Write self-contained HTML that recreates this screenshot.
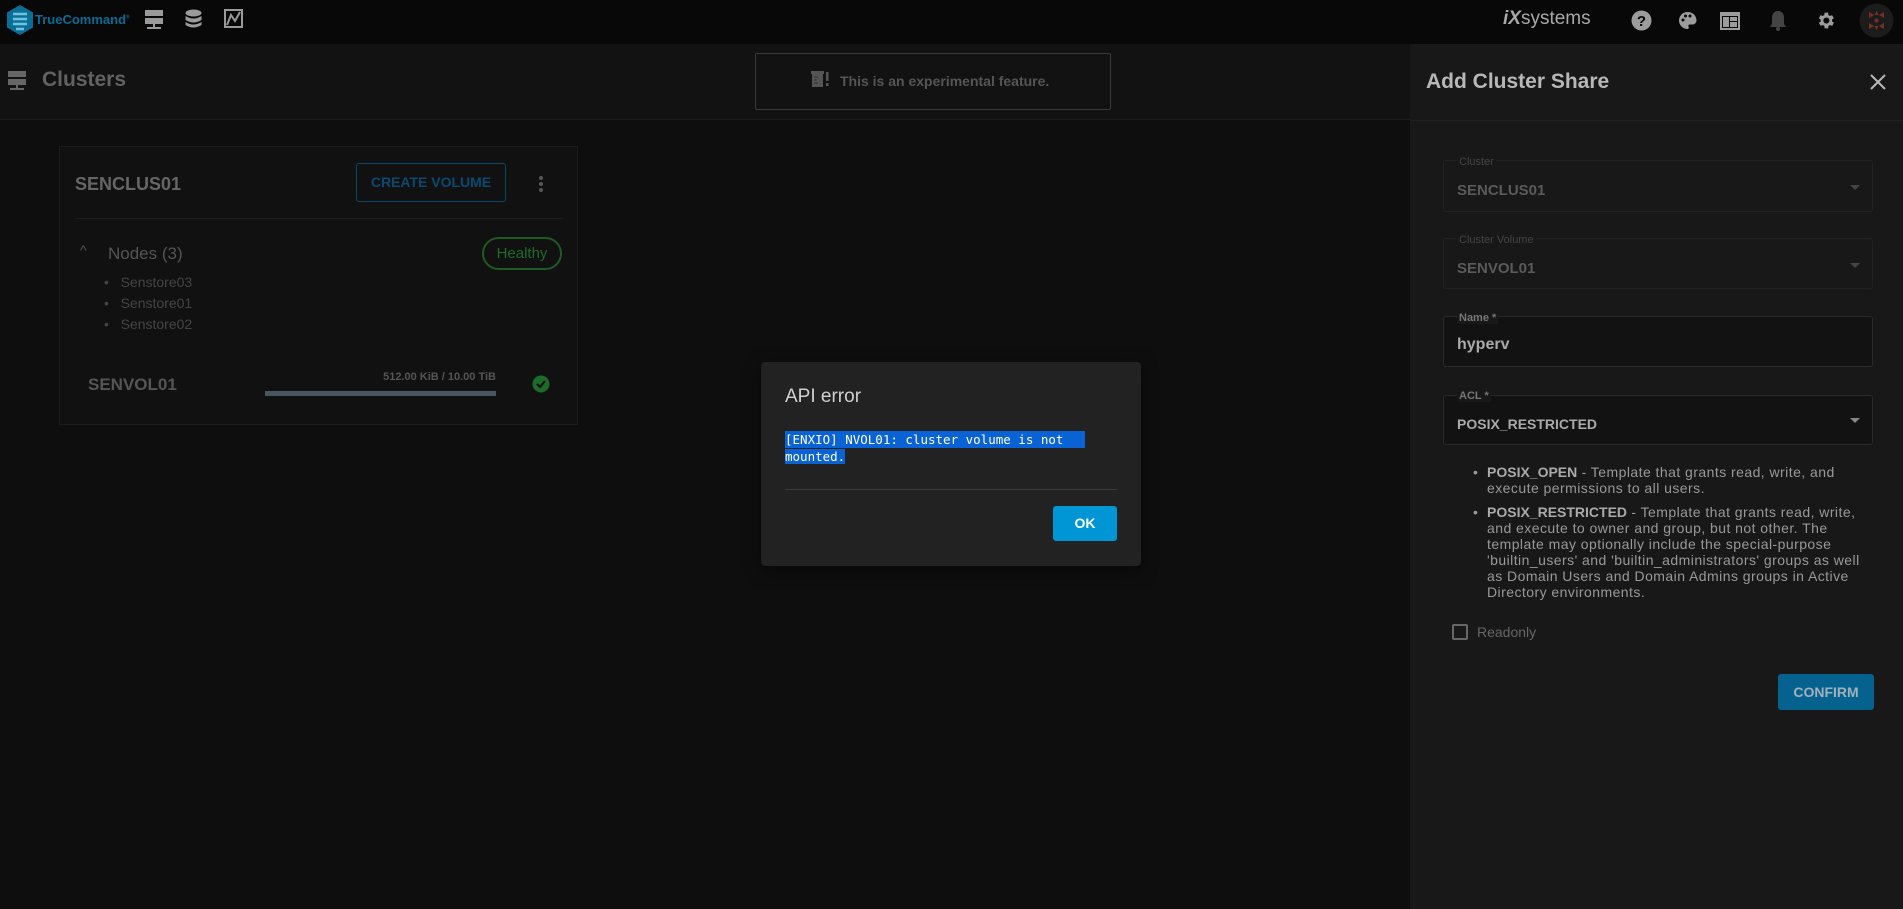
<!DOCTYPE html>
<html><head><meta charset="utf-8">
<style>
*{box-sizing:border-box;margin:0;padding:0}
body{width:1903px;height:909px;background:#0e0e0e;font-family:"Liberation Sans",sans-serif;position:relative;overflow:hidden;color:#888}
.a{position:absolute}
.top{left:0;top:0;width:1903px;height:44px;background:#080808}
.hdr{left:0;top:44px;width:1410px;height:76px;background:#121212;border-bottom:1px solid #1c1c1c}
.panel{left:1410px;top:44px;width:493px;height:865px;background:#181818}
.card{left:59px;top:146px;width:519px;height:279px;background:#111;border:1px solid #1b1b1b}
.fld{left:1443px;width:430px;border:1px solid #222;border-radius:3px}
.lbl{font-size:11px;color:#444}
.val{font-size:15px;font-weight:bold;color:#5a5a5a}
.tri{width:0;height:0;border-left:5px solid transparent;border-right:5px solid transparent;border-top:5px solid #444}
</style></head><body>
<div class="a top"></div>
<svg class="a" style="left:7px;top:5px" width="26" height="30" viewBox="0 0 26 30"><polygon points="13,0 26,7.5 26,22.5 13,30 0,22.5 0,7.5" fill="#0a6f96"/><path d="M6 9h14M6 14h14M6 19h14M9 24h8" stroke="#6ec3e0" stroke-width="2.5"/></svg>
<div class="a" style="left:35px;top:12px;font-size:13px;font-weight:bold;color:#0b6c93">TrueCommand<sup style="font-size:5px">®</sup></div>
<svg class="a" style="left:145px;top:10px" width="18" height="20"><rect x="0" y="0" width="18" height="6" fill="#9a9a9a"/><rect x="0" y="8" width="18" height="6" fill="#9a9a9a"/><rect x="8" y="14" width="2" height="4" fill="#9a9a9a"/><rect x="2" y="17" width="14" height="2" fill="#9a9a9a"/></svg>
<svg class="a" style="left:185px;top:9px" width="17" height="20"><ellipse cx="8.5" cy="4" rx="8" ry="3.5" fill="#9a9a9a"/><path d="M0.5 7q8 5 16 0v4q-8 5-16 0zM0.5 13q8 5 16 0v3q-8 5-16 0z" fill="#9a9a9a"/></svg>
<svg class="a" style="left:224px;top:9px" width="19" height="19"><rect x="1" y="1" width="17" height="17" fill="none" stroke="#9a9a9a" stroke-width="2"/><path d="M3 16L7 6l4 6 5-9" stroke="#9a9a9a" stroke-width="2" fill="none"/></svg>
<div class="a" style="left:1503px;top:8px;font-size:19px;color:#a8a8a8"><b style="font-style:italic">iX</b>systems</div>
<svg class="a" style="left:1631px;top:10px" width="21" height="21"><circle cx="10.5" cy="10.5" r="10" fill="#9c9c9c"/><text x="10.5" y="16" font-size="15" font-weight="bold" text-anchor="middle" fill="#080808" font-family="Liberation Sans">?</text></svg>
<svg class="a" style="left:1678px;top:11px" width="19" height="19"><path d="M9.5 1a8.5 8.5 0 0 0 0 17c1.5 0 1.5-1.5 1-2.5s0-2 1.5-2h2.5a4 4 0 0 0 4-4C18.5 4.5 14.5 1 9.5 1z" fill="#9c9c9c"/><circle cx="5" cy="9" r="1.5" fill="#080808"/><circle cx="7.5" cy="5" r="1.5" fill="#080808"/><circle cx="12" cy="5" r="1.5" fill="#080808"/></svg>
<svg class="a" style="left:1720px;top:12px" width="20" height="18"><rect x="0" y="0" width="20" height="18" fill="#9c9c9c"/><rect x="2" y="4" width="16" height="12" fill="#080808"/><rect x="3" y="5" width="6" height="10" fill="#9c9c9c"/><rect x="10" y="5" width="7" height="4" fill="#9c9c9c"/><rect x="10" y="10" width="7" height="5" fill="#9c9c9c"/></svg>
<svg class="a" style="left:1769px;top:10px" width="18" height="22"><path d="M9 1c-4 0-6 3-6 7v6l-2 3h16l-2-3V8c0-4-2-7-6-7z" fill="#444"/><circle cx="9" cy="19" r="2" fill="#444"/></svg>
<svg class="a" style="left:1815px;top:10px" width="21" height="21" viewBox="0 0 24 24"><path fill="#9c9c9c" d="M19.4 13a7.5 7.5 0 0 0 0-2l2.1-1.6-2-3.5-2.5 1a7.5 7.5 0 0 0-1.7-1L15 3h-4l-.4 2.9a7.5 7.5 0 0 0-1.7 1l-2.5-1-2 3.5L6.6 11a7.5 7.5 0 0 0 0 2l-2.1 1.6 2 3.5 2.5-1c.5.4 1.1.8 1.7 1L11 21h4l.4-2.9c.6-.2 1.2-.6 1.7-1l2.5 1 2-3.5zM13 15.5a3.5 3.5 0 1 1 0-7 3.5 3.5 0 0 1 0 7z"/></svg>
<svg class="a" style="left:1859px;top:3px" width="35" height="35"><circle cx="17.5" cy="17.5" r="17" fill="#1c1c1c"/><path d="M10 9l5 3-5 3zM25 9l-5 3 5 3zM10 26l5-3-5-3zM25 26l-5-3 5-3zM17.5 8l2 4h-4zM17.5 27l2-4h-4z" fill="#7a2e22"/><circle cx="17.5" cy="17.5" r="2" fill="#7a2e22"/></svg>

<div class="a hdr"></div>
<svg class="a" style="left:8px;top:71px" width="18" height="20"><rect x="0" y="0" width="18" height="6" fill="#666"/><rect x="0" y="8" width="18" height="6" fill="#666"/><rect x="8" y="14" width="2" height="4" fill="#666"/><rect x="2" y="17" width="14" height="2" fill="#666"/></svg>
<div class="a" style="left:42px;top:68px;font-size:21px;font-weight:bold;color:#626262">Clusters</div>
<div class="a" style="left:755px;top:53px;width:356px;height:57px;border:1px solid #3a3a3a;border-radius:2px"></div>
<svg class="a" style="left:811px;top:71px" width="19" height="17"><rect x="0" y="0" width="13" height="3" fill="#555"/><rect x="1" y="2" width="11" height="14" fill="#555"/><path d="M3 6h4M3 9h3M3 12h4" stroke="#333" stroke-width="1"/><rect x="15" y="1" width="2.5" height="9" fill="#555"/><rect x="15" y="12" width="2.5" height="3" fill="#555"/></svg>
<div class="a" style="left:840px;top:73px;font-size:14px;font-weight:bold;color:#555">This is an experimental feature.</div>

<div class="a card"></div>
<div class="a" style="left:75px;top:174px;font-size:18px;font-weight:bold;color:#666">SENCLUS01</div>
<div class="a" style="left:356px;top:163px;width:150px;height:39px;border:1px solid #0b4668;border-radius:3px;color:#0a4a70;font-size:14px;font-weight:bold;text-align:center;line-height:37px">CREATE VOLUME</div>
<div class="a" style="left:539px;top:176px;width:4px;height:4px;border-radius:2px;background:#555;box-shadow:0 6px #555,0 12px #555"></div>
<div class="a" style="left:75px;top:218px;width:488px;height:1px;background:#1c1c1c"></div>
<div class="a" style="left:80px;top:242px;font-size:14px;color:#555">^</div>
<div class="a" style="left:108px;top:244px;font-size:17px;color:#555">Nodes (3)</div>
<div class="a" style="left:482px;top:237px;width:80px;height:33px;border:2px solid #1d5a24;border-radius:17px;color:#1f6a2b;font-size:15px;text-align:center;line-height:29px">Healthy</div>
<div class="a" style="left:104px;top:272px;font-size:14px;line-height:21px;color:#444">
<div>•&nbsp;&nbsp; Senstore03</div><div>•&nbsp;&nbsp; Senstore01</div><div>•&nbsp;&nbsp; Senstore02</div></div>
<div class="a" style="left:88px;top:375px;font-size:17px;font-weight:bold;color:#555">SENVOL01</div>
<div class="a" style="left:265px;top:371px;width:231px;text-align:right;font-size:11px;font-weight:bold;color:#555">512.00 KiB / 10.00 TiB</div>
<div class="a" style="left:265px;top:391px;width:231px;height:5px;background:#48565f"></div>
<svg class="a" style="left:532px;top:375px" width="18" height="18"><circle cx="9" cy="9" r="8.5" fill="#1b6b2a"/><path d="M5 9l3 3 5-6" stroke="#0e0e0e" stroke-width="2" fill="none"/></svg>

<div class="a panel"></div>
<div class="a" style="left:1410px;top:120px;width:493px;height:1px;background:#202020"></div>
<div class="a" style="left:1426px;top:70px;font-size:21px;font-weight:bold;color:#b8b8b8">Add Cluster Share</div>
<svg class="a" style="left:1870px;top:74px" width="16" height="16"><path d="M1 1l14 14M15 1L1 15" stroke="#b8b8b8" stroke-width="2"/></svg>

<div class="a fld" style="top:160px;height:52px"></div>
<div class="a lbl" style="left:1457px;top:156px;background:#181818;padding:0 2px">Cluster</div>
<div class="a val" style="left:1457px;top:182px">SENCLUS01</div>
<div class="a tri" style="left:1850px;top:185px"></div>
<div class="a fld" style="top:238px;height:51px"></div>
<div class="a lbl" style="left:1457px;top:234px;background:#181818;padding:0 2px">Cluster Volume</div>
<div class="a val" style="left:1457px;top:260px">SENVOL01</div>
<div class="a tri" style="left:1850px;top:263px"></div>
<div class="a fld" style="top:316px;height:51px;background:#121212;border-color:#2a2a2a"></div>
<div class="a lbl" style="left:1457px;top:312px;background:#181818;padding:0 2px;color:#777;font-weight:bold">Name *</div>
<div class="a" style="left:1457px;top:336px;font-size:16px;font-weight:bold;color:#aaa">hyperv</div>
<div class="a fld" style="top:395px;height:50px;background:#121212;border-color:#2a2a2a"></div>
<div class="a lbl" style="left:1457px;top:390px;background:#181818;padding:0 2px;color:#777;font-weight:bold">ACL *</div>
<div class="a" style="left:1457px;top:416px;font-size:14px;font-weight:bold;color:#aaa">POSIX_RESTRICTED</div>
<div class="a tri" style="left:1850px;top:418px;border-top-color:#888"></div>

<div class="a" style="left:1473px;top:464px;width:400px;font-size:14px;letter-spacing:0.45px;line-height:16px;color:#999">
<div style="position:relative;padding-left:14px"><span style="position:absolute;left:0;top:0">•</span><span style="display:block;width:380px"><b style="color:#aaa;letter-spacing:0">POSIX_OPEN</b> - Template that grants read, write, and execute permissions to all users.</span></div>
<div style="height:8px"></div>
<div style="position:relative;padding-left:14px"><span style="position:absolute;left:0;top:0">•</span><span style="display:block;width:380px"><b style="color:#aaa;letter-spacing:0">POSIX_RESTRICTED</b> - Template that grants read, write, and execute to owner and group, but not other. The template may optionally include the special-purpose 'builtin_users' and 'builtin_administrators' groups as well as Domain Users and Domain Admins groups in Active Directory environments.</span></div>
</div>
<div class="a" style="left:1452px;top:624px;width:16px;height:16px;border:2px solid #666;border-radius:2px"></div>
<div class="a" style="left:1477px;top:624px;font-size:14px;color:#666">Readonly</div>
<div class="a" style="left:1778px;top:674px;width:96px;height:36px;background:#05628f;border-radius:3px;color:#a0b0bc;font-size:14px;font-weight:bold;text-align:center;line-height:36px">CONFIRM</div>

<div class="a" style="left:761px;top:362px;width:380px;height:204px;background:#222;border-radius:4px;box-shadow:0 4px 16px rgba(0,0,0,.5)"></div>
<div class="a" style="left:785px;top:386px;font-size:19px;color:#d0d0d0">API error</div>
<div class="a" style="left:785px;top:431px;width:300px;font-family:'DejaVu Sans Mono','Liberation Mono',monospace;font-size:12.5px;line-height:17px;color:#fff">
<span style="background:#0a63d4;display:inline-block;width:300px">[ENXIO] NVOL01: cluster volume is not</span><br><span style="background:#0a63d4">mounted.</span></div>
<div class="a" style="left:785px;top:489px;width:332px;height:1px;background:#3a3a3a"></div>
<div class="a" style="left:1053px;top:506px;width:64px;height:35px;background:#0095d5;border-radius:3px;color:#fff;font-size:14px;font-weight:bold;text-align:center;line-height:35px">OK</div>
</body></html>
